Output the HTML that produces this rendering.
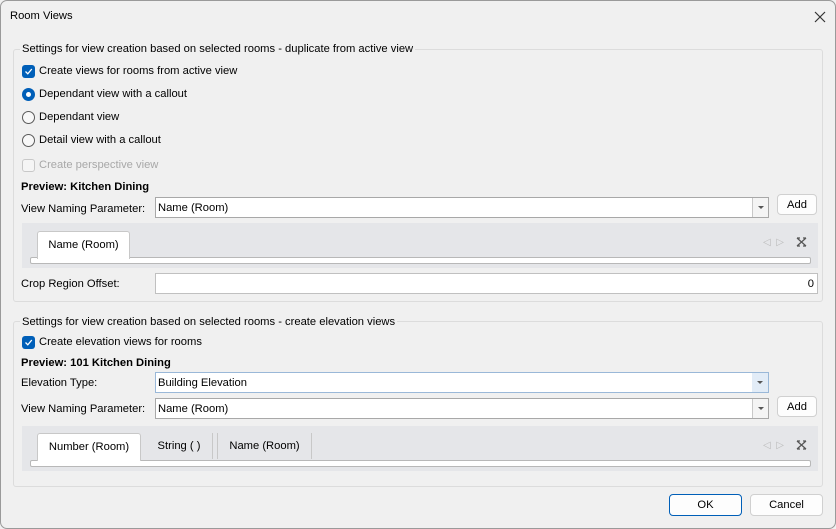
<!DOCTYPE html>
<html><head><meta charset="utf-8"><style>
*{box-sizing:border-box;margin:0;padding:0}
body{width:836px;height:529px;background:#f0f0f0;font-family:"Liberation Sans",sans-serif;font-size:11.2px;color:#000;position:relative;overflow:hidden}
.win{position:absolute;left:0;top:0;width:836px;height:529px;border:1px solid #9a9a9a;border-radius:7px;background:#f0f0f0}
.a{position:absolute;white-space:nowrap}
.grp{position:absolute;border:1px solid #dcdcdc;border-radius:3px}
.glab{position:absolute;background:#f0f0f0;padding:0 2px;line-height:14px}
.cb{position:absolute;width:13px;height:13px;border-radius:3px;background:#005fb8}
.cb svg{position:absolute;left:2px;top:2px}
.cbd{position:absolute;width:13px;height:13px;border-radius:3px;border:1px solid #c8c8c8;background:#f5f5f5}
.rd{position:absolute;width:13px;height:13px;border-radius:50%;border:1px solid #5a5a5a;background:#f8f8f8}
.rs{position:absolute;width:13px;height:13px;border-radius:50%;background:#005fb8}
.rs:after{content:"";position:absolute;left:4px;top:4px;width:5px;height:5px;border-radius:50%;background:#fff}
.cmb{position:absolute;background:#fff;border:1px solid #a8a8a8;line-height:20px;padding-left:2px}
.cmb .dd{position:absolute;right:0;top:0;width:16px;height:100%;border-left:1px solid #c8c8c8;background:#f4f4f4}
.cmb .dd:after{content:"";position:absolute;left:5px;top:8px;border-left:3px solid transparent;border-right:3px solid transparent;border-top:3px solid #555}
.btn{position:absolute;background:#fdfdfd;border:1px solid #d0d0d0;border-radius:4px;text-align:center}
.tp{position:absolute;background:#e5e6e9}
.tab{position:absolute;background:#e5e6e9;border-right:1px solid #c8c8c8;text-align:center;line-height:26px}
.tab.on{background:#fff;border:1px solid #c8c8c8;border-bottom:none;border-radius:3px 3px 0 0}
.strip{position:absolute;background:#fff;border:1px solid #b8b8b8;border-radius:2px}
</style></head><body><div class="win">
<div class="a" style="left:9px;top:9px">Room Views</div>
<svg class="a" style="left:813px;top:10px" width="12" height="12"><path d="M1 1L11 11M11 1L1 11" stroke="#333" stroke-width="1.2"/></svg>

<div class="grp" style="left:12px;top:48px;width:810px;height:253px"></div>
<div class="glab" style="left:19px;top:41px">Settings for view creation based on selected rooms - duplicate from active view</div>
<div class="cb" style="left:21px;top:64px"><svg width="9" height="9"><path d="M1.5 4.5L3.8 6.8L7.8 2" stroke="#fff" stroke-width="1.3" fill="none"/></svg></div>
<div class="a" style="left:38px;top:64px">Create views for rooms from active view</div>
<div class="rs" style="left:21px;top:87px"></div>
<div class="a" style="left:38px;top:87px">Dependant view with a callout</div>
<div class="rd" style="left:21px;top:110px"></div>
<div class="a" style="left:38px;top:110px">Dependant view</div>
<div class="rd" style="left:21px;top:133px"></div>
<div class="a" style="left:38px;top:133px">Detail view with a callout</div>
<div class="cbd" style="left:21px;top:158px"></div>
<div class="a" style="left:38px;top:158px;color:#a8a8a8">Create perspective view</div>
<div class="a" style="left:20px;top:180px;font-weight:bold">Preview: Kitchen Dining</div>
<div class="a" style="left:20px;top:202px">View Naming Parameter:</div>
<div class="cmb" style="left:154px;top:196px;width:614px;height:21px">Name (Room)<div class="dd"></div></div>
<div class="btn" style="left:776px;top:193px;width:40px;height:21px;line-height:20px">Add</div>
<div class="tp" style="left:21px;top:222px;width:796px;height:45px"></div>
<div class="strip" style="left:29px;top:256px;width:781px;height:7px"></div>
<div class="tab on" style="left:36px;top:230px;width:93px;height:28px">Name (Room)</div>
<div class="a" style="left:762px;top:236px;color:#bbb;font-size:10px">◁ &nbsp;▷</div>
<svg class="a" style="left:795px;top:236px" width="11" height="10"><path d="M1 1L10 9M10 1L1 9M1 1h3M7 1h3M1 9h3M7 9h3" stroke="#555" stroke-width="1.2" fill="none"/></svg>
<div class="a" style="left:20px;top:277px">Crop Region Offset:</div>
<div class="cmb" style="left:154px;top:272px;width:663px;height:21px;border-color:#c0c0c0;text-align:right;padding-right:3px">0</div>

<div class="grp" style="left:12px;top:320px;width:810px;height:166px"></div>
<div class="glab" style="left:19px;top:314px">Settings for view creation based on selected rooms - create elevation views</div>
<div class="cb" style="left:21px;top:335px"><svg width="9" height="9"><path d="M1.5 4.5L3.8 6.8L7.8 2" stroke="#fff" stroke-width="1.3" fill="none"/></svg></div>
<div class="a" style="left:38px;top:335px">Create elevation views for rooms</div>
<div class="a" style="left:20px;top:356px;font-weight:bold">Preview: 101 Kitchen Dining</div>
<div class="a" style="left:20px;top:376px">Elevation Type:</div>
<div class="cmb" style="left:154px;top:371px;width:614px;height:21px;border-color:#9ab8d8">Building Elevation<div class="dd" style="border-left:none;background:#e2ecf7"></div></div>
<div class="a" style="left:20px;top:402px">View Naming Parameter:</div>
<div class="cmb" style="left:154px;top:397px;width:614px;height:21px">Name (Room)<div class="dd"></div></div>
<div class="btn" style="left:776px;top:395px;width:40px;height:21px;line-height:20px">Add</div>
<div class="tp" style="left:21px;top:425px;width:796px;height:45px"></div>
<div class="strip" style="left:29px;top:459px;width:781px;height:7px"></div>
<div class="tab on" style="left:36px;top:432px;width:104px;height:28px">Number (Room)</div>
<div class="tab" style="left:145px;top:432px;width:67px;height:26px">String ( )</div>
<div class="tab" style="left:216px;top:432px;width:95px;height:26px;border-left:1px solid #c8c8c8">Name (Room)</div>
<div class="a" style="left:762px;top:439px;color:#bbb;font-size:10px">◁ &nbsp;▷</div>
<svg class="a" style="left:795px;top:439px" width="11" height="10"><path d="M1 1L10 9M10 1L1 9M1 1h3M7 1h3M1 9h3M7 9h3" stroke="#555" stroke-width="1.2" fill="none"/></svg>

<div class="btn" style="left:668px;top:493px;width:73px;height:22px;line-height:21px;border-color:#005fb8">OK</div>
<div class="btn" style="left:749px;top:493px;width:73px;height:22px;line-height:21px">Cancel</div>
</div></body></html>
